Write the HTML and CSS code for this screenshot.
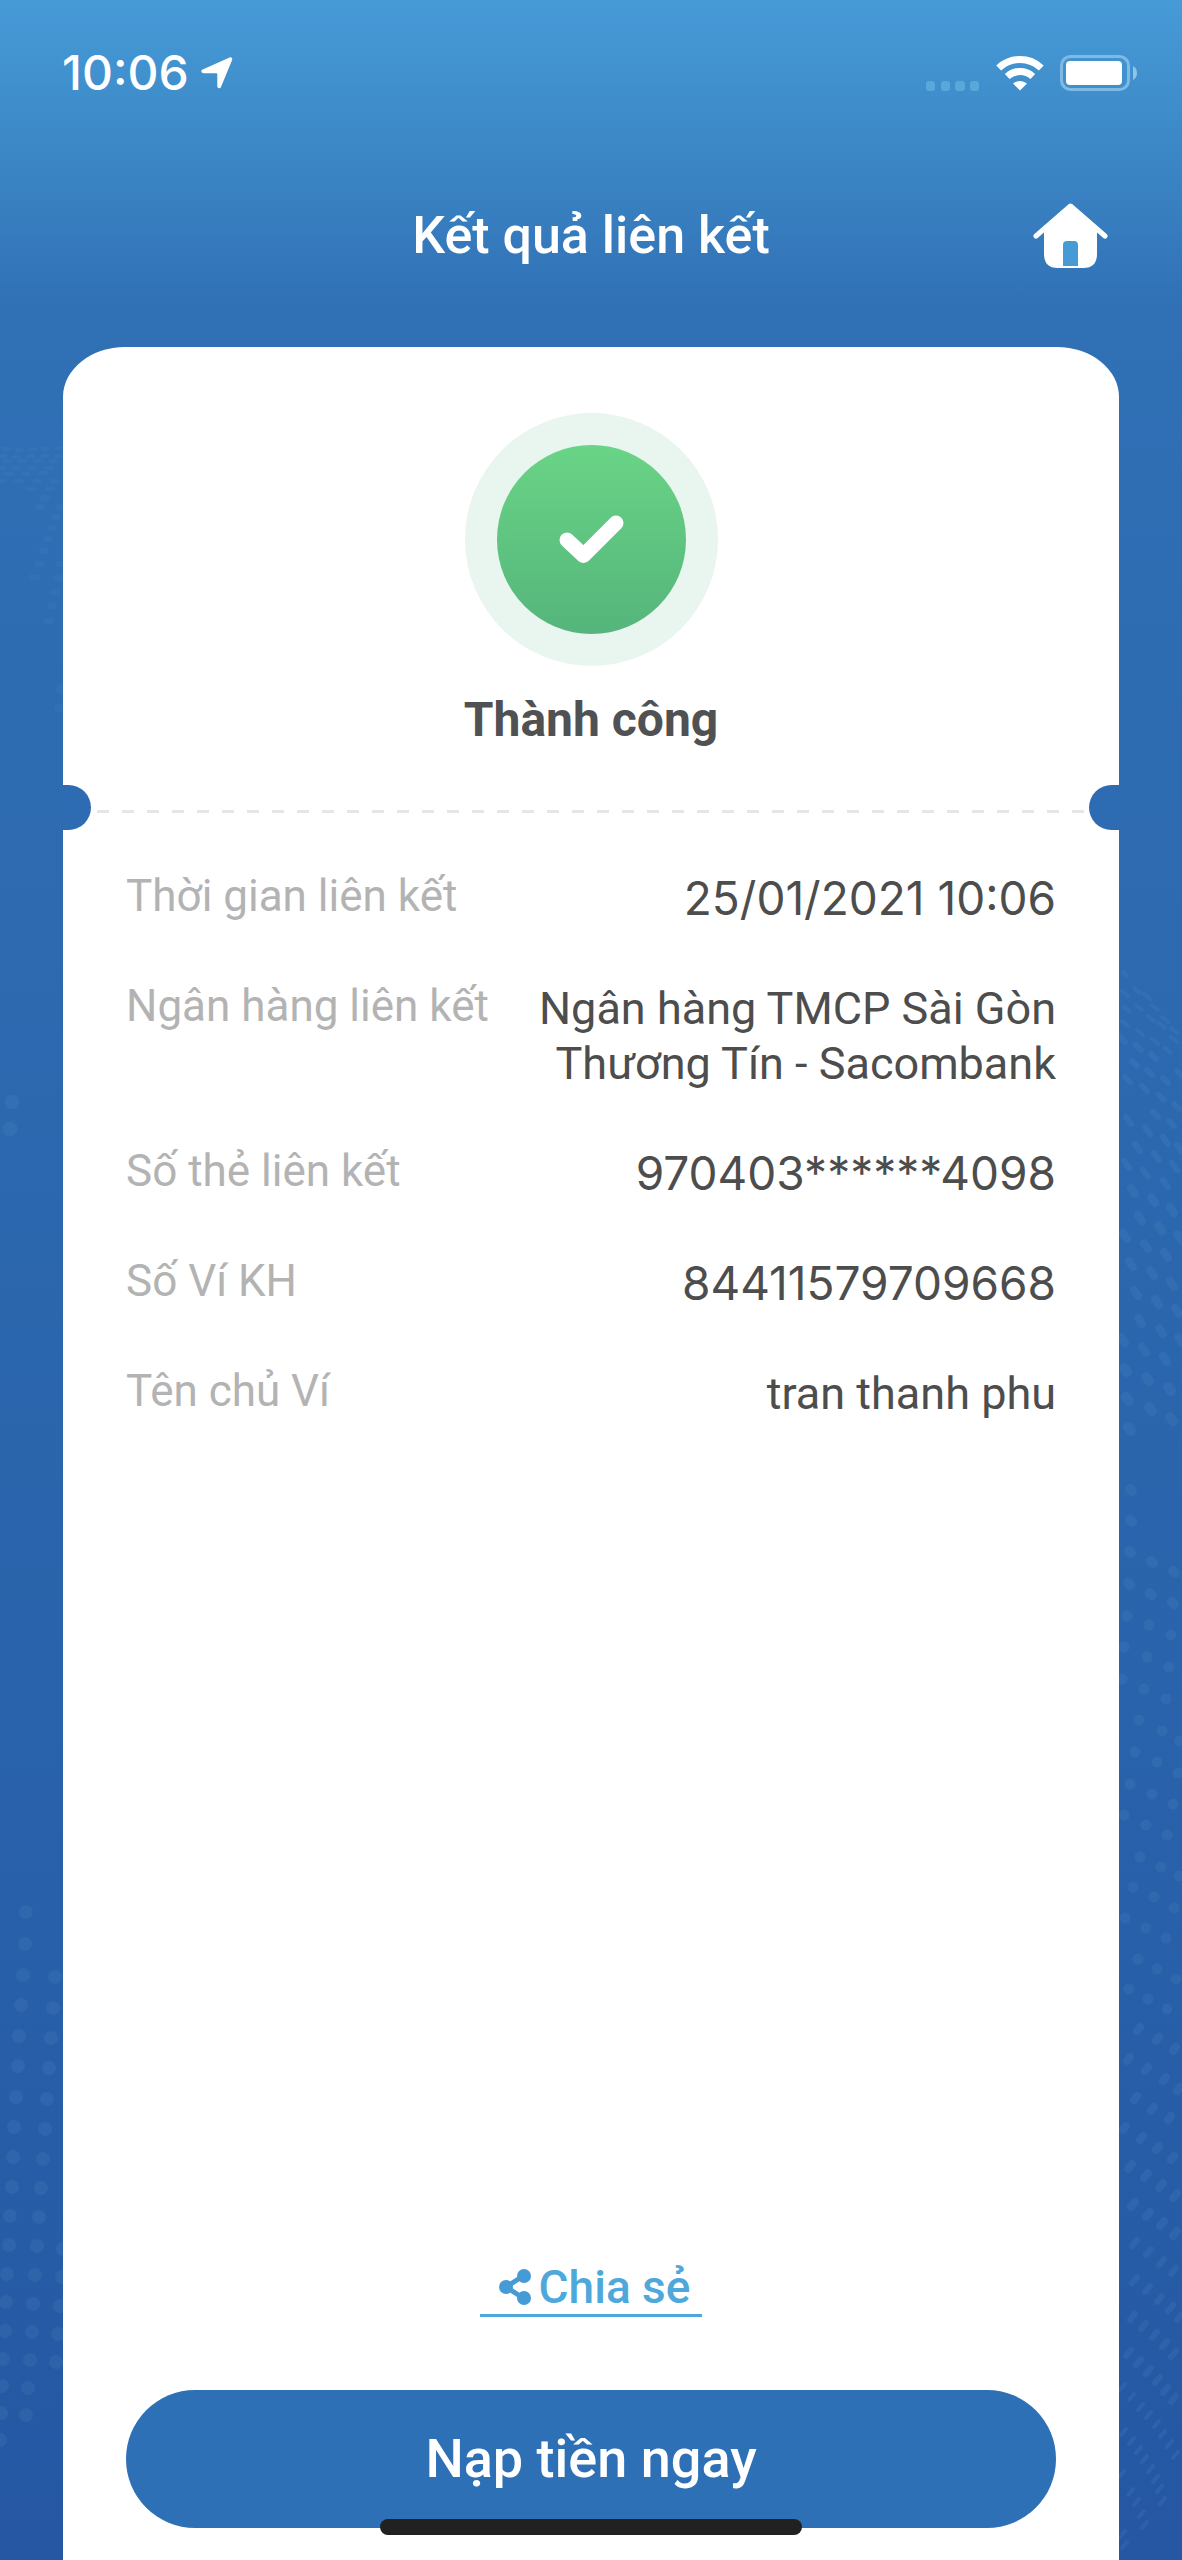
FILE: index.html
```
<!DOCTYPE html>
<html lang="vi">
<head>
<meta charset="utf-8">
<meta name="viewport" content="width=device-width, initial-scale=1">
<title>Kết quả liên kết</title>
<link rel="stylesheet" href="styles.css">
</head>
<body>
<div class="screen">
  <svg class="dots dots-left" width="64" height="2560" viewBox="0 0 64 2560" aria-hidden="true">
    <g class="faint">
      <path stroke-width="4" d="M4 449h5M17 450h5M30 449h5M43 449h5M56 448h5M0 456h5M14 457h5M28 456h5M42 456h5M56 456h5M5 461h5M20 461h5M35 461h5M50 461h5M-1 468h5M13 468h6M29 468h6M46 468h6M6 474h6M23 474h6M40 473h6M-1 481h5M16 481h6M34 481h6M52 481h6M28 489h6M47 489h6"/>
      <path stroke-width="6" d="M43 498h4M38 507h4M58 507h4M54 517h4M50 528h4M46 539h4M42 551h4M37 564h4M32 577h5M59 564h4M56 578h4M53 592h4M50 606h4M46 621h5"/>
      <path stroke-width="10" d="M61 689h0M59 708h0"/>
    </g>
    <path stroke-width="15" d="M12 1102h0M10 1129h0"/>
    <path stroke-width="14" d="M26 1912h0M25 1944h0M23 1975h0M21 2005h0M19 2036h0M18 2066h0M16 2097h0M14 2127h0M13 2157h0M12 2187h0M10 2216h0M9 2245h0M7 2274h0M6 2302h0M5 2331h0M3 2359h0M2 2386h0M1 2413h0M0 2440h0M55 1977h0M53 2008h0M51 2038h0M49 2068h0M47 2099h0M45 2129h0M43 2159h0M41 2188h0M39 2217h0M37 2246h0M35 2275h0M33 2304h0M32 2332h0M30 2360h0M28 2388h0M26 2415h0M63 2249h0M62 2277h0M60 2306h0M58 2334h0M56 2362h0"/>
  </svg>
  <svg class="dots dots-right" width="64" height="2560" viewBox="0 0 64 2560" aria-hidden="true">
    <path stroke-width="4" d="M5 972l4 4M4 991l6 5M16 988l6 5M26 994l6 5M34 1005l6 5M44 1017l6 5M53 1028l6 5M6 1007l6 5M18 1005l6 5M30 1016l6 5M41 1023l6 5M53 1037l6 5M4 1021l6 5M19 1030l6 5M34 1039l6 5M47 1048l6 5"/>
    <path stroke-width="6" d="M3 1037l4 5M18 1045l5 5M33 1054l5 5M45 1078l5 5M59 1071l5 5M14 1061l5 5M29 1070l5 5M41 1095l5 5M56 1104l5 5M7 1077l5 5M24 1086l5 5M35 1112l5 5M51 1121l5 5M8 1117l5 7M27 1127l5 7M45 1137l5 7M59 1145l5 7M17 1144l5 7M36 1153l5 7M54 1163l5 7M6 1161l5 7M25 1170l5 7M45 1180l5 7"/>
    <path stroke-width="8" d="M13 1188l4 6M33 1197l4 6M52 1207l4 6M20 1215l4 6M40 1225l4 6M59 1234l4 6M5 1233l4 6M26 1243l4 6M46 1252l4 6M11 1261l4 6M32 1270l4 6M52 1281l4 6M16 1290l4 6M37 1299l4 6M57 1308l4 6M20 1318l4 6M41 1328l4 6M60 1337l4 6M3 1337l4 6M24 1347l4 6M45 1356l4 6"/>
    <path stroke-width="10" d="M6 1368l3 4M28 1377l3 4M50 1387l3 4M8 1397l3 4M31 1407l3 4M52 1417l3 4M10 1427l3 4M12 1489l2 2M12 1520l2 2M11 1551l2 2M33 1561l2 2M55 1571l2 2M10 1583l2 2M32 1593l2 2M54 1602l2 2"/>
    <path stroke-width="11" d="M9 1616h0M31 1625h0M53 1635h0M6 1647h0M29 1657h0M51 1667h0M4 1679h0M26 1689h0M48 1699h0M21 1720h0M44 1731h0M62 1741h0M17 1752h0M39 1762h0M60 1773h0M12 1784h0M34 1794h0M55 1804h0M6 1815h0M28 1825h0M49 1835h0M22 1857h0M43 1867h0M61 1876h0M15 1887h0M36 1897h0M56 1908h0M7 1918h0M28 1928h0M48 1938h0M20 1959h0M39 1969h0M58 1979h0M11 1989h0M30 1999h0M49 2009h0"/>
    <path stroke-width="8" d="M19 2031l3-4M38 2041l3-4M55 2051l3-4M9 2061l3-4M27 2071l3-4M45 2081l3-4M59 2091l3-4M16 2100l3-4M33 2111l3-4M50 2120l3-4M5 2130l3-4M22 2140l3-4M38 2150l3-4M53 2160l3-4M10 2169l4-5M26 2178l4-5M41 2188l4-5M55 2198l4-5M13 2207l4-5M28 2217l4-5M42 2226l4-5M55 2236l4-5"/>
    <path stroke-width="6" d="M14 2246l5-6M28 2255l5-6M41 2265l5-6M53 2274l5-6M14 2283l5-6M27 2292l5-6M39 2302l5-6M50 2311l5-6M59 2320l5-6M12 2320l5-6M23 2329l5-6M34 2338l5-6M44 2347l5-6M53 2357l5-6M8 2356l5-6M18 2365l5-6M28 2374l5-6M37 2383l5-6M45 2393l5-6M53 2402l5-6"/>
    <path stroke-width="4" d="M2 2390l5-6M11 2400l5-6M20 2410l5-6M28 2418l5-6M36 2427l5-6M42 2437l5-6M49 2447l5-6M55 2458l5-6M3 2435l5-6M11 2444l5-6M18 2453l5-6M24 2462l5-6M30 2472l5-6M35 2482l5-6M39 2492l5-6M42 2504l5-6M1 2477l5-6M10 2495l5-6M16 2505l5-6M21 2517l5-6M24 2528l5-6M2 2537l5-6M4 2548l5-6"/>
  </svg>

  <div class="status">
    <time class="clock">10:06</time>
    <svg class="location" width="32" height="32" viewBox="0 0 32 32" aria-hidden="true"><path fill="#fff" d="M28.600.5c1.800-.8 3.100.6 2.500 2.500L20 30c-.8 2-3.700 1.500-3.700-.7V17.500c0-1-.3-1.300-1.300-1.300H2.600c-2.500 0-3-2.800-.9-3.700z"/></svg>
    <div class="indicators">
      <svg class="signal" width="54" height="10" viewBox="0 0 54 10" aria-hidden="true"><g fill="#5aa8d9"><rect width="9" height="10" rx="3"/><rect x="15" width="9" height="10" rx="3"/><rect x="29" width="10" height="10" rx="3"/><rect x="44" width="9" height="10" rx="3"/></g></svg>
      <svg class="wifi" width="48" height="36" viewBox="0 0 48 36" aria-hidden="true"><path fill="none" stroke="#fff" stroke-width="7" d="M2.700 13a31 31 0 0 1 42.600 0M11.200 21.500a19 19 0 0 1 25.600 0"/><path fill="#fff" d="M17 28.500a11 11 0 0 1 14 0L24 35.600z"/></svg>
      <svg class="battery" width="78" height="36" viewBox="0 0 78 36" aria-hidden="true"><rect x="1.500" y="1.500" width="67" height="33" rx="9" fill="none" stroke="#7dbbe3" stroke-width="3"/><rect x="6" y="6" width="56" height="24" rx="4" fill="#fff"/><path fill="#8fc3e8" d="M73 11q4 2 4 7t-4 7z"/></svg>
    </div>
  </div>

  <header class="bar">
    <h1 class="title">Kết quả liên kết</h1>
    <a class="home" href="#" aria-label="Trang chủ">
      <svg width="75" height="66" viewBox="0 0 75 66" aria-hidden="true"><path fill="none" stroke="#fff" stroke-width="5" stroke-linecap="round" stroke-linejoin="round" d="M3 33 37.500 3 72 33"/><path fill="#fff" d="M37.500 3 64 26v25q0 14-14 14H25Q11 65 11 51V26z"/><path fill="#469bd6" d="M30 63V42q0-4 4-4h7q4 0 4 4v21z"/></svg>
    </a>
  </header>

  <main class="card">
    <section class="result">
      <svg class="badge" width="253" height="253" viewBox="0 0 253 253" aria-hidden="true">
        <defs><linearGradient id="green" x1="0" y1="0" x2="0" y2="1"><stop offset="0" stop-color="#69d486"/><stop offset="1" stop-color="#55b57b"/></linearGradient></defs>
        <circle cx="126.500" cy="126.500" r="126.500" fill="#e8f6ef"/>
        <circle cx="126.500" cy="126.500" r="94.500" fill="url(#green)"/>
        <path fill="none" stroke="#fff" stroke-width="15" stroke-linecap="round" stroke-linejoin="round" d="M102 127l16.500 15.500L151 110"/>
      </svg>
      <h2 class="outcome">Thành công</h2>
    </section>

    <div class="tear"></div>

    <dl class="details">
      <dt>Thời gian liên kết</dt><dd class="number">25/01/2021 10:06</dd>
      <dt>Ngân hàng liên kết</dt><dd>Ngân hàng TMCP Sài Gòn Thương Tín - Sacombank</dd>
      <dt>Số thẻ liên kết</dt><dd class="number">970403******4098</dd>
      <dt>Số Ví KH</dt><dd class="number">84411579709668</dd>
      <dt>Tên chủ Ví</dt><dd>tran thanh phu</dd>
    </dl>

    <div class="actions">
      <a class="share" href="#">
        <svg width="32" height="36" viewBox="0 0 32 36" aria-hidden="true"><path fill="none" stroke="#469bd6" stroke-width="5" d="M25 6.500 7 18l18 11.500"/><g fill="#469bd6"><circle cx="25" cy="7" r="7"/><circle cx="7" cy="18" r="7"/><circle cx="25" cy="29" r="7"/></g></svg>
        <span>Chia sẻ</span>
      </a>
      <button class="topup" type="button">Nạp tiền ngay</button>
    </div>
  </main>

  <div class="home-indicator"></div>
</div>
</body>
</html>
```

FILE: styles.css
```
* {
  box-sizing: border-box;
}

body {
  margin: 0;
  font-family: Roboto, "Noto Sans", sans-serif;
  background: #2557a3;
}

.screen {
  position: relative;
  display: flex;
  flex-direction: column;
  min-height: 100vh;
  overflow: hidden;
  background: linear-gradient(#469bd7 0, #3a83c3 180px, #3070b5 310px, #2d6ab0 900px, #2963ab 1700px, #2557a3 100%);
}

.dots {
  position: absolute;
  top: 0;
  fill: none;
  stroke: #5a93c8;
  stroke-linecap: round;
  opacity: 0.16;
}

.dots-left {
  left: 0;
}

.dots-right {
  right: 0;
}

.faint {
  opacity: 0.7;
}

.status {
  position: relative;
  display: flex;
  align-items: center;
  height: 146px;
  padding: 0 44px 0 62px;
}

.clock,
.number {
  font-family: Inter, sans-serif;
}

.clock {
  font-size: 48px;
  font-weight: 500;
  line-height: 56px;
  color: #fff;
}

.location {
  margin-left: 12px;
}

.indicators {
  display: flex;
  align-items: flex-end;
  gap: 16px;
  margin-left: auto;
}

.bar {
  position: relative;
  display: grid;
  grid-template-columns: 75px 1fr 75px;
  align-items: center;
  height: 201px;
  padding: 0 74px 22px;
}

.title {
  grid-column: 2;
  margin: 0;
  font-size: 52px;
  font-weight: 500;
  line-height: 64px;
  text-align: center;
  color: #fff;
}

.home {
  display: block;
  height: 66px;
}

.card {
  position: relative;
  display: flex;
  flex: 1;
  flex-direction: column;
  margin: 0 63px;
  padding-top: 66px;
  background: #fff;
  border-radius: 62px 62px 0 0 / 50px 50px 0 0;
}

.result {
  display: flex;
  flex-direction: column;
  align-items: center;
}

.outcome {
  margin: 26px 0 0;
  font-size: 48px;
  font-weight: 700;
  line-height: 56px;
  color: #505153;
}

.tear {
  position: relative;
  height: 46px;
  margin-top: 37px;
  overflow: hidden;
  background: repeating-linear-gradient(90deg, #e6e6e6 0 12px, transparent 12px 25px) 34px 25px / calc(100% - 64px) 3px no-repeat;
}

.tear::before,
.tear::after {
  position: absolute;
  top: 0;
  height: 45px;
  content: "";
  background: #2d6cb2;
}

.tear::before {
  left: 0;
  width: 28px;
  border-radius: 0 23px 23px 0;
}

.tear::after {
  right: 0;
  width: 30px;
  border-radius: 23px 0 0 23px;
}

.details {
  display: grid;
  grid-template-columns: auto 1fr;
  gap: 55px 32px;
  margin: 40px 63px 0;
}

.details dt {
  font-size: 44px;
  line-height: 50px;
  color: #b3b3b3;
}

.details dd {
  margin: 0;
  font-size: 45px;
  line-height: 55px;
  text-align: right;
  color: #4d4d4d;
}

.details .number {
  font-size: 46px;
}

.actions {
  display: flex;
  flex-direction: column;
  align-items: center;
  gap: 73px;
  margin: auto 63px 0;
  padding: 64px 0 32px;
}

.share {
  display: flex;
  align-items: center;
  gap: 8px;
  padding: 0 12px 0 19px;
  border-bottom: 3px solid #4fa8da;
  font-size: 46px;
  font-weight: 500;
  line-height: 54px;
  color: #4fa8da;
  text-decoration: none;
}

.topup {
  width: 100%;
  height: 138px;
  padding: 0;
  border: 0;
  border-radius: 69px;
  font-family: inherit;
  font-size: 54px;
  font-weight: 500;
  line-height: 64px;
  color: #fff;
  background: #2d70b5;
  cursor: pointer;
}

.home-indicator {
  position: absolute;
  bottom: 25px;
  left: 50%;
  width: 422px;
  height: 16px;
  margin-left: -211px;
  background: #212121;
  border-radius: 8px;
}
```
